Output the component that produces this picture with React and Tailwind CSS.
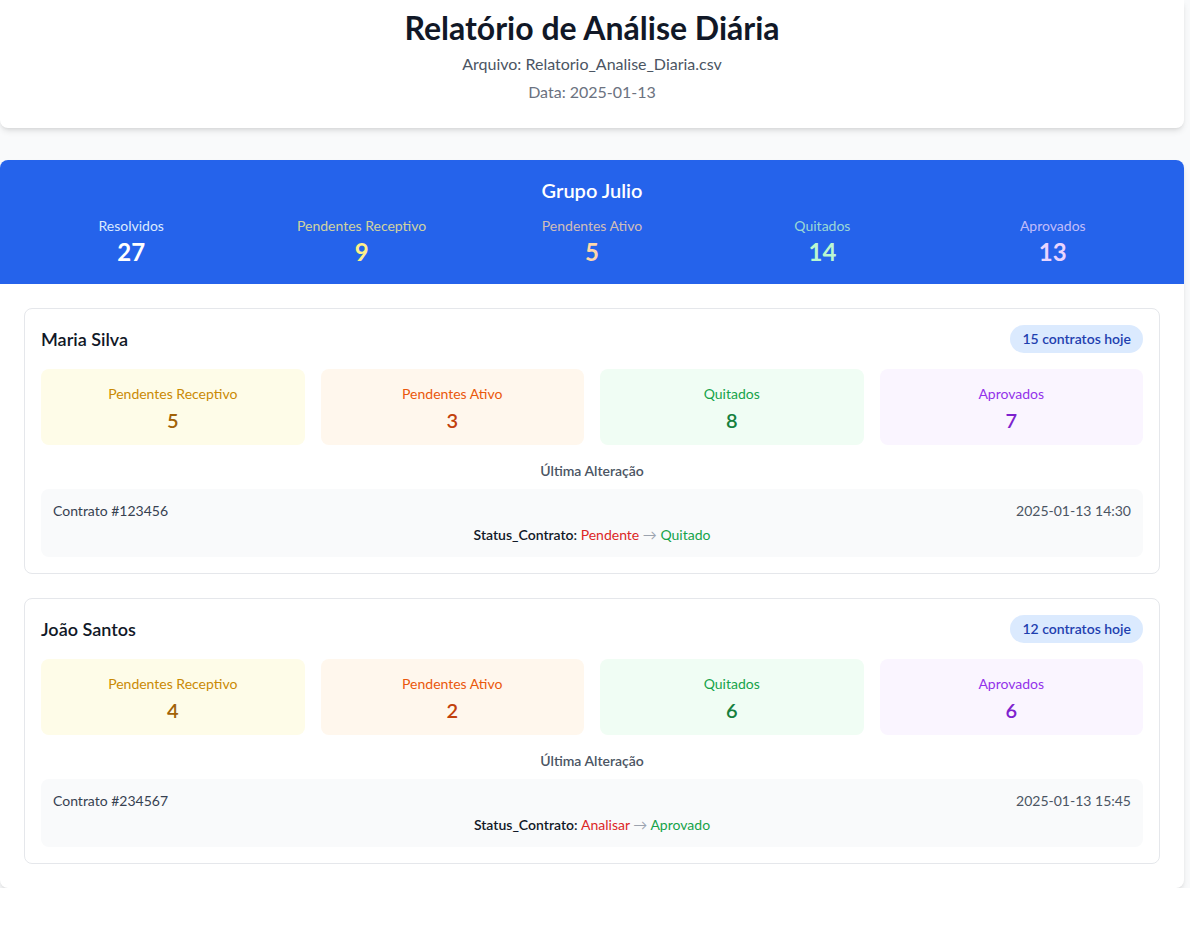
const groupStats = [
  { label: 'Resolvidos', value: 27, labelClass: 'text-[#dbeafe]', valueClass: 'text-white' },
  { label: 'Pendentes Receptivo', value: 9, labelClass: 'text-[#fef08a]/80', valueClass: 'text-[#fef08a]' },
  { label: 'Pendentes Ativo', value: 5, labelClass: 'text-[#fed7aa]/80', valueClass: 'text-[#fed7aa]' },
  { label: 'Quitados', value: 14, labelClass: 'text-[#bbf7d0]/80', valueClass: 'text-[#bbf7d0]' },
  { label: 'Aprovados', value: 13, labelClass: 'text-[#e9d5ff]/80', valueClass: 'text-[#e9d5ff]' },
];

const people = [
  {
    name: 'Maria Silva',
    total: 15,
    stats: [5, 3, 8, 7],
    contract: '#123456',
    date: '2025-01-13 14:30',
    from: 'Pendente',
    to: 'Quitado',
  },
  {
    name: 'João Santos',
    total: 12,
    stats: [4, 2, 6, 6],
    contract: '#234567',
    date: '2025-01-13 15:45',
    from: 'Analisar',
    to: 'Aprovado',
  },
];

const boxes = [
  { label: 'Pendentes Receptivo', box: 'bg-[#fefce8]', label_: 'text-[#ca8a04]', value: 'text-[#a16207]' },
  { label: 'Pendentes Ativo', box: 'bg-[#fff7ed]', label_: 'text-[#ea580c]', value: 'text-[#c2410c]' },
  { label: 'Quitados', box: 'bg-[#f0fdf4]', label_: 'text-[#16a34a]', value: 'text-[#15803d]' },
  { label: 'Aprovados', box: 'bg-[#faf5ff]', label_: 'text-[#9333ea]', value: 'text-[#7e22ce]' },
];

const PersonCard = ({ person }) => (
  <div className="border border-[#e5e7eb] rounded-lg p-4">
    <div className="flex items-center justify-between mb-4">
      <h3 className="text-lg font-semibold text-[#111827]">{person.name}</h3>
      <span className="px-3 py-1 rounded-full bg-[#dbeafe] text-[#1e40af] text-sm font-semibold">
        {person.total} contratos hoje
      </span>
    </div>
    <div className="grid grid-cols-4 gap-4">
      {boxes.map((b, i) => (
        <div key={b.label} className={`rounded-lg pt-[15px] pb-[11px] text-center ${b.box}`}>
          <div className={`text-sm ${b.label_}`}>{b.label}</div>
          <div className={`text-xl font-semibold mt-[2px] ${b.value}`}>{person.stats[i]}</div>
        </div>
      ))}
    </div>
    <div className="mt-4 text-center text-sm font-semibold text-[#4b5563]">Última Alteração</div>
    <div className="mt-2 bg-[#f9fafb] rounded-lg p-3 text-sm">
      <div className="flex justify-between">
        <span className="text-[#374151]">Contrato {person.contract}</span>
        <span className="text-[#4b5563]">{person.date}</span>
      </div>
      <div className="mt-1 text-center">
        <span className="font-semibold text-[#111827]">Status_Contrato: </span>
        <span className="text-[#dc2626]">{person.from}</span>
        <span className="text-[#9ca3af]"> → </span>
        <span className="text-[#16a34a]">{person.to}</span>
      </div>
    </div>
  </div>
);

export default function App() {
  return (
    <div className="w-[1190px] bg-[#f9fafb] font-['Lato',sans-serif]">
      <header className="w-[1184px] bg-white rounded-b-lg shadow-md pt-2.5 pb-6 text-center">
        <h1 className="text-[32px] leading-9 font-bold text-[#111827]">Relatório de Análise Diária</h1>
        <p className="mt-1.5 text-[#4b5563]">Arquivo: Relatorio_Analise_Diaria.csv</p>
        <p className="mt-1 text-[#6b7280]">Data: 2025-01-13</p>
      </header>

      <section className="w-[1184px] mt-8 bg-white rounded-lg shadow-md overflow-hidden">
        <div className="bg-[#2563eb] px-6 pt-4 pb-4 text-center">
          <h2 className="text-xl font-semibold text-white mb-3">Grupo Julio</h2>
          <div className="grid grid-cols-5 gap-4">
            {groupStats.map((s) => (
              <div key={s.label}>
                <div className={`text-sm ${s.labelClass}`}>{s.label}</div>
                <div className={`text-2xl font-bold ${s.valueClass}`}>{s.value}</div>
              </div>
            ))}
          </div>
        </div>
        <div className="p-6 space-y-6">
          {people.map((p) => (
            <PersonCard key={p.name} person={p} />
          ))}
        </div>
      </section>
    </div>
  );
}
